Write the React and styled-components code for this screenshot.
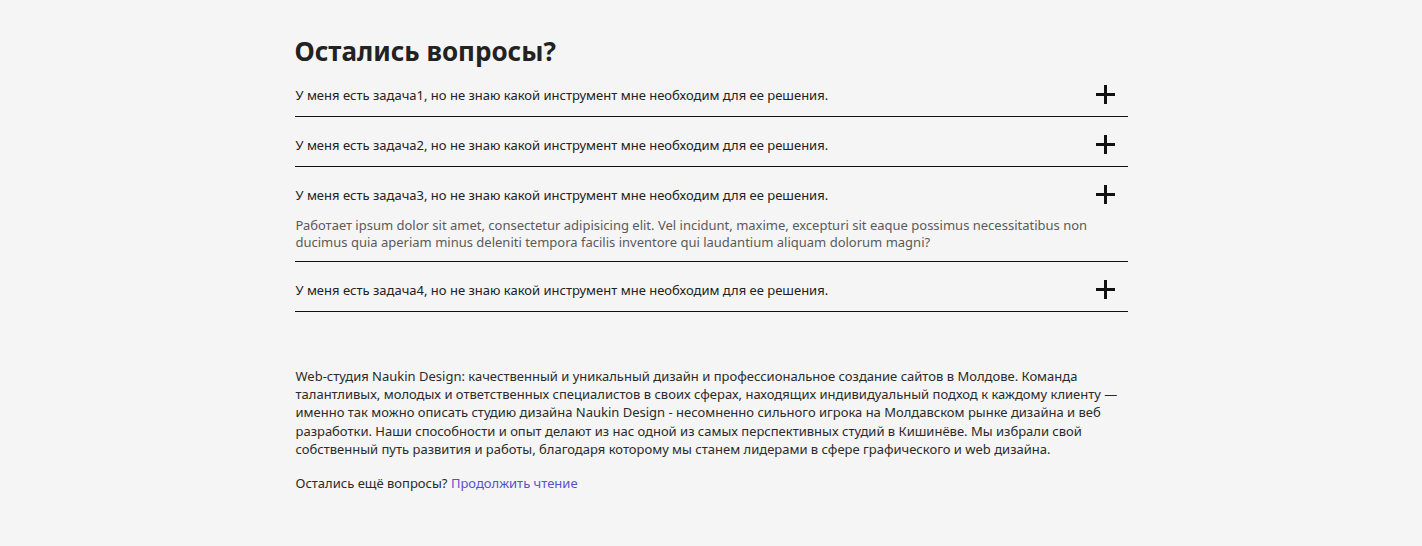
import React, { useState } from "react";
import styled, { createGlobalStyle } from "styled-components";

const GlobalStyle = createGlobalStyle`
  html, body {
    margin: 0;
    padding: 0;
    background: #f5f5f5;
  }
  body {
    font-family: "Noto Sans", "DejaVu Sans", sans-serif;
    color: #222;
  }
`;

const Page = styled.div`
  /* Display & Box Model */
  box-sizing: border-box;
  width: 833px;
  margin: 0 auto;
  padding-top: 35px;
  padding-bottom: 40px;
`;

const Title = styled.h2`
  /* Display & Box Model */
  margin: 0;
  height: 32px;

  /* Text */
  font-size: 26px;
  line-height: 32px;
  font-weight: 700;
  color: #222;
`;

const List = styled.div`
  /* Display & Box Model */
  display: flex;
  flex-direction: column;
`;

const Item = styled.div`
  /* Display & Box Model */
  border-bottom: 1px solid #111;
`;

const Question = styled.div`
  /* Display & Box Model */
  display: flex;
  align-items: center;
  justify-content: space-between;
  height: 19px;
  padding: 18px 13px 12px 1px;
  cursor: pointer;

  /* Text */
  font-size: 13px;
  line-height: 16px;
  color: #222;
`;

const Plus = styled.svg`
  /* Display & Box Model */
  display: block;
  width: 19px;
  height: 19px;
  flex-shrink: 0;
`;

const Answer = styled.div`
  /* Display & Box Model */
  padding: 1px 36px 10px 1px;

  /* Text */
  font-size: 13px;
  line-height: 17px;
  font-weight: 400;
  color: #5a5a5a;
`;

const About = styled.div`
  /* Display & Box Model */
  margin-top: 55px;
  padding-left: 1px;

  /* Text */
  font-size: 13px;
  line-height: 18.2px;
  color: #2a2a2a;

  p {
    margin: 0 0 16px;
  }
`;

const Link = styled.a`
  /* Text */
  color: #5a4fcf;
  text-decoration: none;
`;

const questions = [1, 2, 3, 4].map(n => ({
  id: n,
  text: `У меня есть задача${n}, но не знаю какой инструмент мне необходим для ее решения.`
}));

const answer =
  "Работает ipsum dolor sit amet, consectetur adipisicing elit. Vel incidunt, maxime, excepturi sit eaque possimus necessitatibus non ducimus quia aperiam minus deleniti tempora facilis inventore qui laudantium aliquam dolorum magni?";

const PlusIcon = () => (
  <Plus viewBox="0 0 19 19">
    <path d="M9.5 0v19M0 9.5h19" stroke="#111" strokeWidth="3" fill="none" />
  </Plus>
);

const App = () => {
  const [open, setOpen] = useState(3);

  return (
    <>
      <GlobalStyle />
      <Page>
        <Title>Остались вопросы?</Title>
        <List>
          {questions.map(q => (
            <Item key={q.id}>
              <Question onClick={() => setOpen(open === q.id ? null : q.id)}>
                <span>{q.text}</span>
                <PlusIcon />
              </Question>
              {open === q.id && <Answer>{answer}</Answer>}
            </Item>
          ))}
        </List>
        <About>
          <p>
            Web-студия Naukin Design: качественный и уникальный дизайн и
            профессиональное создание сайтов в Молдове. Команда талантливых,
            молодых и ответственных специалистов в своих сферах, находящих
            индивидуальный подход к каждому клиенту — именно так можно описать
            студию дизайна Naukin Design - несомненно сильного игрока на
            Молдавском рынке дизайна и веб разработки. Наши способности и опыт
            делают из нас одной из самых перспективных студий в Кишинёве. Мы
            избрали свой собственный путь развития и работы, благодаря которому
            мы станем лидерами в сфере графического и web дизайна.
          </p>
          <p>
            Остались ещё вопросы? <Link href="#">Продолжить чтение</Link>
          </p>
        </About>
      </Page>
    </>
  );
};

export default App;
